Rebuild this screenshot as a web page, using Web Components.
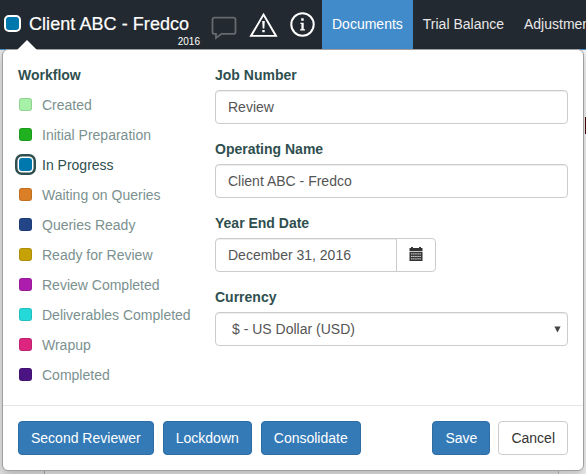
<!DOCTYPE html>
<html lang="en">
<head>
<meta charset="utf-8">
<title>Client ABC - Fredco</title>
<style>
html,body{margin:0;height:100%;overflow:hidden}
body{font:14px/20px "Liberation Sans",Arial,sans-serif;color:#2f4f4f;background:#e6e6e6}
</style>
</head>
<body>
<engagement-app></engagement-app>
<script>
const define = (name, html, setup) => customElements.define(name, class extends HTMLElement {
  connectedCallback() {
    if (this.shadowRoot) return;
    const t = document.createElement('template');
    t.innerHTML = '<style>*{box-sizing:border-box}</style>' + html;
    this.attachShadow({mode: 'open'}).append(t.content.cloneNode(true));
    if (setup) setup(this, this.shadowRoot);
  }
});

define('nav-tab', `<style>
:host{display:flex;align-items:center;height:49px;padding:0 10px;color:#e8e8e8;white-space:nowrap;flex:none}
:host([active]){background:#428bca;color:#fff}
span{display:block;margin-top:-1px}
</style><span><slot></slot></span>`);

define('app-header', `<style>
:host{display:flex;height:49px;background:#222930;color:#fff;overflow:hidden}
.job{display:flex;width:200px;padding:15px 0 0 4px;flex:none}
.status{width:17px;height:17px;border:2px solid #fff;border-radius:5px;background:#0077ad;flex:none}
.name{width:179px;padding-left:8px;flex:none;white-space:nowrap}
.title{font-size:18px;line-height:18px;letter-spacing:.06px;-webkit-text-stroke:.2px #fff}
.year{font-size:10px;line-height:10px;text-align:right;padding-top:4px}
.icons{display:block;width:122px;height:49px;flex:none}
</style>
<div class="job"><div class="status"></div><div class="name"><div class="title">Client ABC - Fredco</div><div class="year">2016</div></div></div>
<svg class="icons" viewBox="200 0 122 49" fill="none">
<path d="M214.500 17.600H233.500a2 2 0 0 1 2 2V31.900a2 2 0 0 1-2 2H221.500L216 38V33.900H214.500a2 2 0 0 1-2-2V19.600a2 2 0 0 1 2-2Z" stroke="#666a70" stroke-width="1.800"/>
<path d="M263.500 14.600 276 35.900H251Z" stroke="#fff" stroke-width="1.900"/>
<path d="M262.200 21h2.600l-.5 7.500h-1.600ZM262.300 30h2.400v2.200h-2.400Z" fill="#fff"/>
<circle cx="302.500" cy="24.500" r="11.200" stroke="#fff" stroke-width="2"/>
<path d="M301.200 18.200h2.500v2.500h-2.500ZM300.400 22.700h3.300v6.600h1.300v1.200h-4.900v-1.200h1.300v-5.300h-1Z" fill="#fff"/>
</svg>
<nav-tab active>Documents</nav-tab><nav-tab>Trial Balance</nav-tab><nav-tab>Adjustments</nav-tab>`);

define('workflow-state', `<style>
:host{display:flex;align-items:center;height:30px;padding-left:1px;color:#7b918f;white-space:nowrap}
i{width:13px;height:13px;border-radius:3px;background:var(--c);border:1px solid rgba(0,0,0,.12);margin:-1px 10px 0 0;flex:none}
:host([selected]){color:#2f4f4f}
:host([selected]) i{border:0;box-shadow:0 0 0 1.500px #fff,0 0 0 4px #2f4f4f}
</style><i></i><slot></slot>`, (host, root) => root.querySelector('i').style.setProperty('--c', host.getAttribute('color')));

define('workflow-list', `<style>
:host{display:block;width:197px;flex:none}
b{display:block;height:25px}
</style><b>Workflow</b>
<workflow-state color="#a7f0a7">Created</workflow-state>
<workflow-state color="#20b020">Initial Preparation</workflow-state>
<workflow-state color="#0077ad" selected>In Progress</workflow-state>
<workflow-state color="#db7f26">Waiting on Queries</workflow-state>
<workflow-state color="#234588">Queries Ready</workflow-state>
<workflow-state color="#c6a208">Ready for Review</workflow-state>
<workflow-state color="#ac1dad">Review Completed</workflow-state>
<workflow-state color="#26d9d9">Deliverables Completed</workflow-state>
<workflow-state color="#db257f">Wrapup</workflow-state>
<workflow-state color="#4b1483">Completed</workflow-state>`);

define('form-field', `<style>
:host{display:block;height:74px}
b{display:block;height:25px}
.row{display:flex;height:34px}
.box{display:flex;align-items:center;flex:1;padding:0 12px;border:1px solid #ccc;border-radius:4px;box-shadow:inset 0 1px 1px rgba(0,0,0,.075);color:#555;background:#fff}
.addon,.arrow{display:none}
:host([kind=date]) .box{flex:0 0 182px;border-radius:4px 0 0 4px}
:host([kind=date]) .addon{display:flex;align-items:flex-start;width:40px;margin-left:-1px;padding:8px 0 0 12px;border:1px solid #ccc;border-radius:0 4px 4px 0}
:host([kind=select]) .box{padding:0 6px 0 16px}
:host([kind=select]) .arrow{display:block;margin-left:auto}
</style><b></b><div class="row"><div class="box"><slot></slot>
<svg class="arrow" width="7" height="7" viewBox="0 0 7 7"><path d="M.4.5h6.200L3.500 6.500Z" fill="#444"/></svg></div>
<div class="addon"><svg width="14" height="14" viewBox="0 0 14 14"><path d="M.5 1H2V0h2v1h6V0h2v1h1.500v3.200H.5Z" fill="#333"/><path d="M.5 5h13v9H.5Z" fill="#333"/><path d="M2 6.900h10M2 9.400h10M2 11.900h10" stroke="#fff" stroke-width=".9" stroke-dasharray="1.500 .6"/></svg></div></div>`,
(host, root) => root.querySelector('b').textContent = host.getAttribute('label'));

define('action-button', `<style>
:host{display:flex;align-items:center;justify-content:center;height:34px;border:1px solid #2e6da4;border-radius:4px;background:#337ab7;color:#fff;white-space:nowrap;box-sizing:border-box;padding:0 12px}
:host([plain]){background:#fff;border-color:#ccc;color:#333}
</style><slot></slot>`);

define('job-popover', `<style>
:host{display:flex;flex-direction:column;position:absolute;left:2px;top:49px;width:582px;height:422px;box-sizing:border-box;border:1px solid #a0a0a0;border-radius:6px;background:#fff;box-shadow:0 5px 10px rgba(0,0,0,.2)}
.tip{position:absolute;left:14px;top:-11px}
.body{display:flex;height:355px;padding:15px 15px 0}
.fields{flex:1}
.foot{display:flex;gap:9px;border-top:1px solid #e5e5e5;padding:15px 15px 0}
.gap{flex:1}
.cancel{margin-left:-1px}
</style>
<svg class="tip" width="20" height="11" viewBox="0 0 20 11"><path d="M0 11 10 1 20 11Z" fill="#fff"/></svg>
<div class="body"><workflow-list></workflow-list><div class="fields">
<form-field label="Job Number">Review</form-field>
<form-field label="Operating Name">Client ABC - Fredco</form-field>
<form-field label="Year End Date" kind="date">December 31, 2016</form-field>
<form-field label="Currency" kind="select">$ - US Dollar (USD)</form-field>
</div></div>
<div class="foot"><action-button>Second Reviewer</action-button><action-button>Lockdown</action-button><action-button>Consolidate</action-button><div class="gap"></div><action-button>Save</action-button><action-button plain class="cancel">Cancel</action-button></div>`);

define('page-backdrop', `<style>
:host{display:flex;flex-direction:column;height:425px}
.strip{height:1px;background:#428bca}
.rows{display:flex;flex:1}
.side{width:45px;background:#e3e3e3;border-right:1px solid #aaa}
.main{flex:1;background:#e9e9e9;border-right:1px solid #bbb}
.edge{width:27px;background:#f0f0f0;padding:67px 0 0 26px}
.mark{height:17px;background:#4a0505}
</style><div class="strip"></div><div class="rows"><div class="side"></div><div class="main"></div><div class="edge"><div class="mark"></div></div></div>`);

define('engagement-app', `<style>:host{display:block;position:relative;height:474px;overflow:hidden}</style>
<app-header></app-header><page-backdrop></page-backdrop><job-popover></job-popover>`);
</script>
</body>
</html>
